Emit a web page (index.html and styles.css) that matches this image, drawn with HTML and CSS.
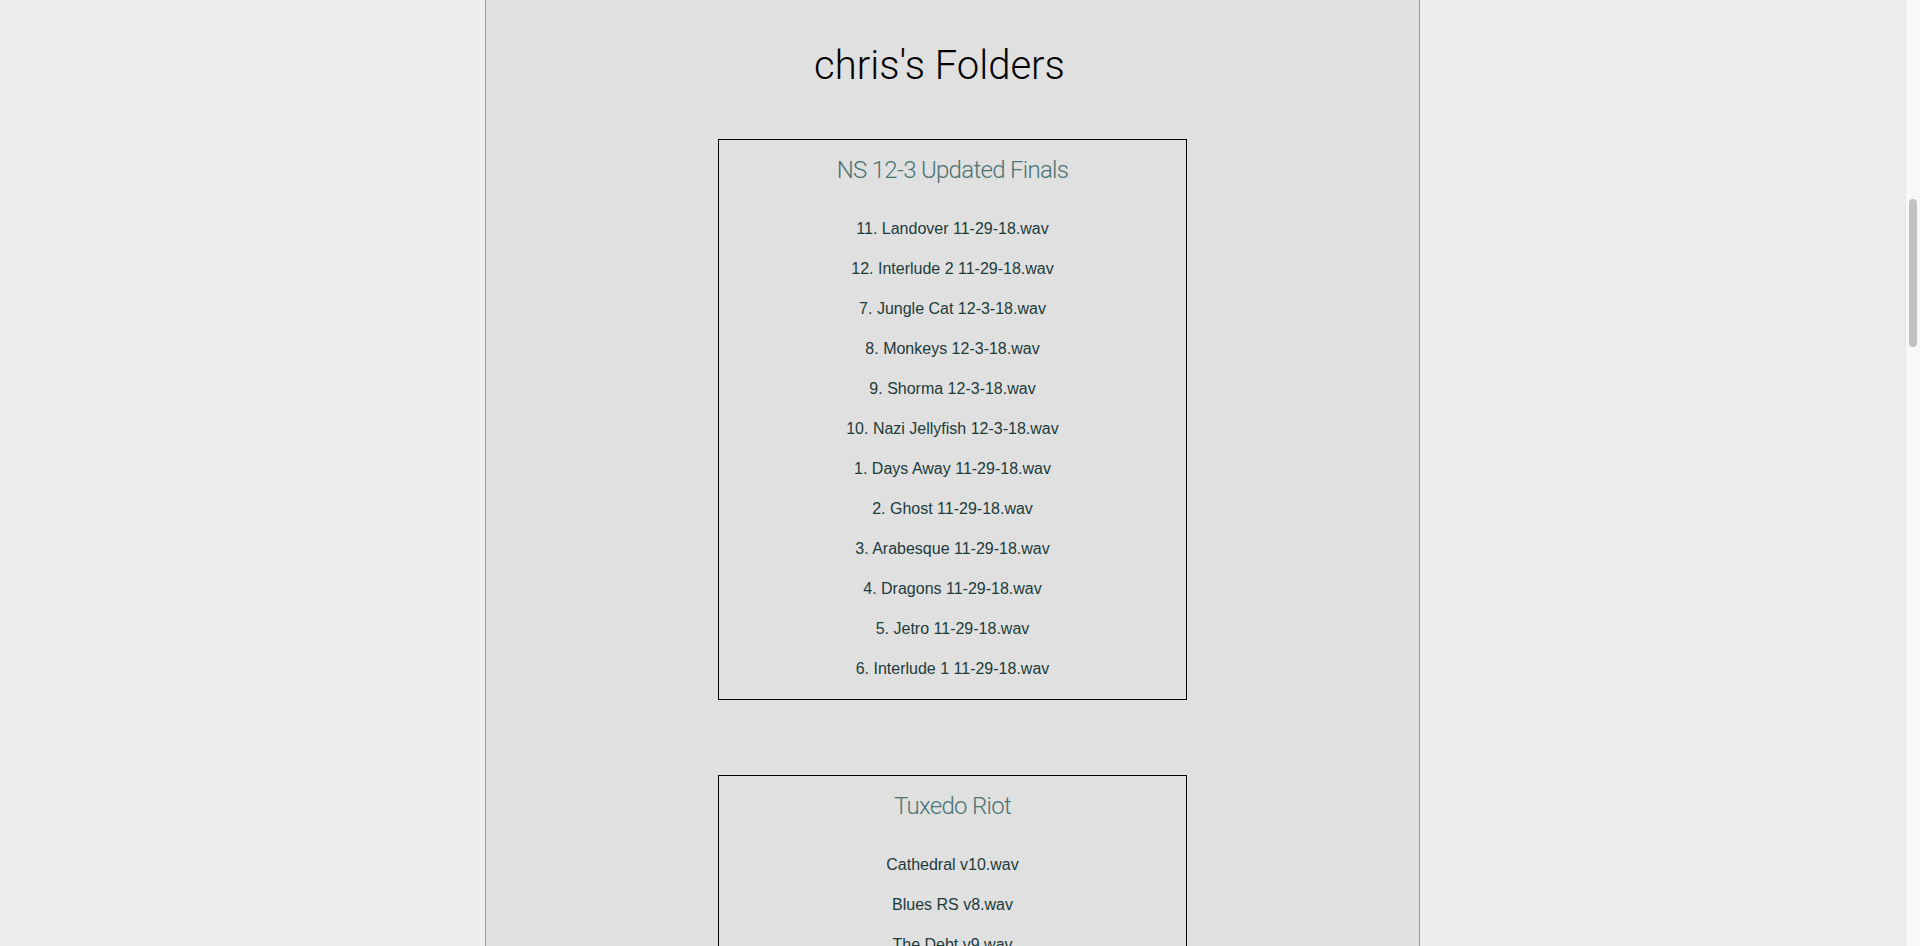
FILE: index.html
```html
<!DOCTYPE html>
<html lang="en">
<head>
<meta charset="utf-8">
<title>chris's Folders</title>
<link rel="stylesheet" href="styles.css">
</head>
<body>
<div class="viewport">
  <main class="column">
    <h1 class="page-title">chris's Folders</h1>
    <section class="folder">
      <h2 class="folder-name">NS 12-3 Updated Finals</h2>
      <ul class="files">
        <li>11. Landover 11-29-18.wav</li>
        <li>12. Interlude 2 11-29-18.wav</li>
        <li>7. Jungle Cat 12-3-18.wav</li>
        <li>8. Monkeys 12-3-18.wav</li>
        <li>9. Shorma 12-3-18.wav</li>
        <li>10. Nazi Jellyfish 12-3-18.wav</li>
        <li>1. Days Away 11-29-18.wav</li>
        <li>2. Ghost 11-29-18.wav</li>
        <li>3. Arabesque 11-29-18.wav</li>
        <li>4. Dragons 11-29-18.wav</li>
        <li>5. Jetro 11-29-18.wav</li>
        <li>6. Interlude 1 11-29-18.wav</li>
      </ul>
    </section>
    <section class="folder">
      <h2 class="folder-name">Tuxedo Riot</h2>
      <ul class="files">
        <li>Cathedral v10.wav</li>
        <li>Blues RS v8.wav</li>
        <li>The Debt v9.wav</li>
      </ul>
    </section>
  </main>
</div>
<div class="scrollbar"><div class="scrollbar-thumb"></div></div>
</body>
</html>
```
FILE: styles.css
```css
html, body {
  margin: 0;
  padding: 0;
  height: 946px;
  overflow: hidden;
}
body {
  background: #eeeeee;
  display: flex;
}
.viewport {
  flex: 1;
  height: 946px;
  overflow: hidden;
}
.column {
  margin-left: 485px;
  width: 933px;
  min-height: 946px;
  background: #e0e0e0;
  border-left: 1px solid #9a9a9a;
  border-right: 1px solid #9a9a9a;
  padding-top: 42px;
  box-sizing: content-box;
  text-align: center;
}
.page-title {
  margin: 0 0 49px;
  padding-right: 26px;
  font-family: Roboto, "Liberation Sans", sans-serif;
  font-weight: 300;
  font-size: 40px;
  line-height: 48px;
  color: #000;
}
.folder {
  width: 50%;
  margin: 0 auto 75px;
  border: 1px solid #000;
  padding: 16px 0 10px;
}
.folder-name {
  margin: 0;
  font-family: Roboto, "Liberation Sans", sans-serif;
  font-weight: 300;
  font-size: 24px;
  letter-spacing: -0.7px;
  line-height: 28px;
  color: #4a7372;
}
.files {
  list-style: none;
  margin: 25px 0 0;
  padding: 0;
}
.files li {
  font-family: "Liberation Sans", Arial, sans-serif;
  font-size: 16px;
  line-height: 40px;
  color: #1c3b3b;
}
.scrollbar {
  width: 14px;
  height: 946px;
  background: #f8f8f8;
  border-left: 1px solid #e4e4e4;
  flex: none;
}
.scrollbar-thumb {
  margin: 199px 0 0 3px;
  width: 8px;
  height: 148px;
  border-radius: 4px;
  background: #c1c1c1;
}
```
